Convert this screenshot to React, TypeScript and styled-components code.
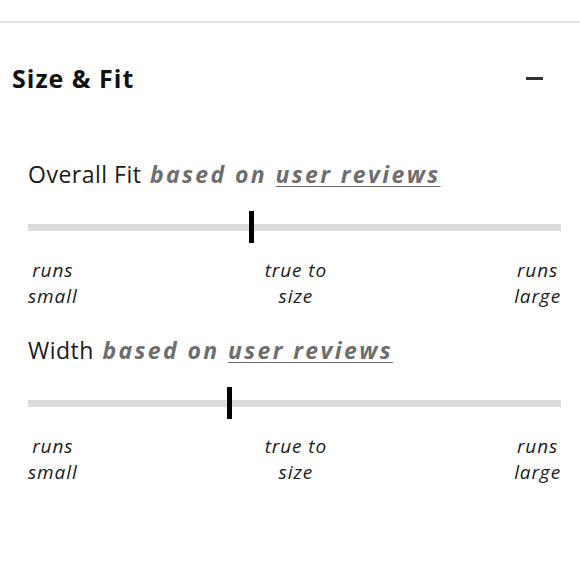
import React from "react";
import styled, { createGlobalStyle } from "styled-components";

const Global = createGlobalStyle`
  html, body { margin: 0; padding: 0; background: #fff; }
  body { font-family: "Open Sans", "Noto Sans", sans-serif; color: #1a1a1a; }
`;

const Page = styled.div`
  width: 580px;
  height: 580px;
  box-sizing: border-box;
  padding-top: 21px;
`;

const Panel = styled.section`
  border-top: 2px solid #e4e4e4;
`;

const Header = styled.div`
  display: flex;
  align-items: center;
  justify-content: space-between;
  padding: 35px 37px 0 12px;
  height: 40px;
`;

const Title = styled.h2`
  margin: 0;
  font-size: 25px;
  font-weight: 700;
  letter-spacing: 1px;
  color: #111;
`;

const Minus = styled.span`
  display: block;
  width: 17px;
  height: 3px;
  background: #333;
`;

const Body = styled.div`
  display: flex;
  flex-direction: column;
  gap: 25px;
  padding: 60px 19px 0 28px;
`;

const Metric = styled.div`
  display: flex;
  flex-direction: column;
`;

const Label = styled.div`
  font-size: 23px;
  line-height: 32px;
  letter-spacing: 0.5px;
  color: #1a1a1a;
`;

const Based = styled.em`
  font-weight: 700;
  color: #6e6e6e;
  letter-spacing: 2.4px;
  margin-left: 2px;
`;

const Link = styled.span`
  text-decoration: underline;
  text-underline-offset: 3px;
  text-decoration-thickness: 1px;
`;

const Track = styled.div`
  position: relative;
  height: 7px;
  background: #dcdcdc;
  margin-top: 34px;
`;

const Marker = styled.span`
  position: absolute;
  top: -13px;
  width: 5px;
  height: 32px;
  margin-left: -2px;
  background: #000;
`;

const Scale = styled.div`
  display: flex;
  justify-content: space-between;
  margin-top: 26px;
`;

const Tick = styled.div`
  text-align: center;
  font-style: italic;
  font-size: 19px;
  line-height: 26px;
  letter-spacing: 0.9px;
  color: #1a1a1a;
`;

type MetricProps = { name: string; pos: number };

const FitMetric = ({ name, pos }: MetricProps) => (
  <Metric>
    <Label>
      {name} <Based>based on <Link>user reviews</Link></Based>
    </Label>
    <Track>
      <Marker style={{ left: `${pos}%` }} />
    </Track>
    <Scale>
      <Tick>runs<br />small</Tick>
      <Tick>true to<br />size</Tick>
      <Tick>runs<br />large</Tick>
    </Scale>
  </Metric>
);

export default function App() {
  return (
    <>
      <Global />
      <Page>
        <Panel>
          <Header>
            <Title>Size &amp; Fit</Title>
            <Minus />
          </Header>
          <Body>
            <FitMetric name="Overall Fit" pos={41.8} />
            <FitMetric name="Width" pos={37.7} />
          </Body>
        </Panel>
      </Page>
    </>
  );
}
